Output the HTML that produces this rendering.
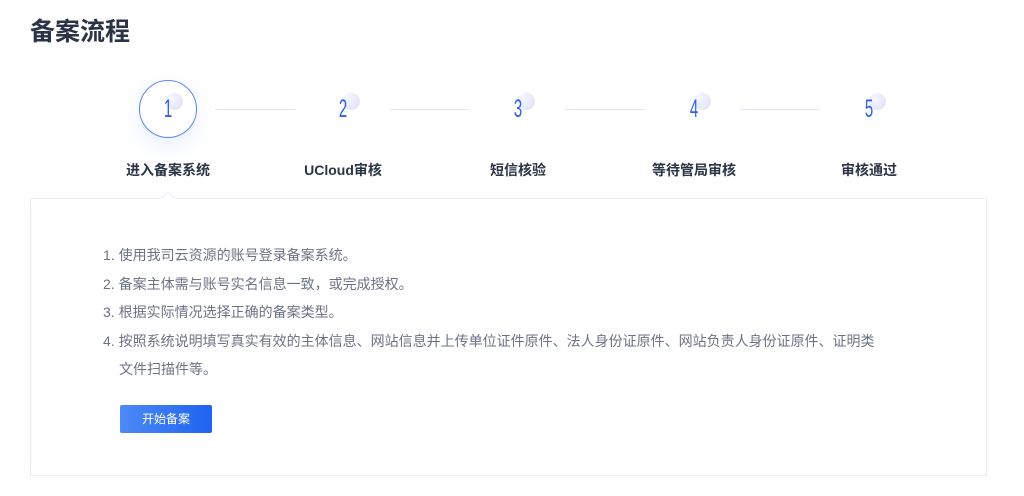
<!DOCTYPE html>
<html><head><meta charset="utf-8"><style>
body{margin:0;width:1024px;height:496px;background:#fff;font-family:"Liberation Sans","Noto Sans CJK SC",sans-serif;position:relative;overflow:hidden}
h1{position:absolute;left:30px;top:12px;margin:0;font-size:25px;font-weight:700;color:#2b3346}
.step{position:absolute;top:80px;width:140px;margin-left:-70px;text-align:center}
.num{position:relative;width:58px;height:58px;margin:0 auto;border-radius:50%}
.num.active{border:1px solid #5b86f5;box-shadow:0 8px 18px rgba(91,134,245,.12);width:56px;height:56px;background:#fff}
.num .dot{position:absolute;left:29px;top:13px;width:17px;height:17px;border-radius:50%;background:radial-gradient(circle at 30% 30%,#f6f7fe,#d9e0f9)}
.num .d{position:absolute;left:0;right:0;top:15px;font-size:25px;color:#2f5ff0;transform:scaleX(.6);font-family:"Liberation Sans",sans-serif}
.num.active .d{top:14px}
.lbl{margin-top:22px;font-size:14px;font-weight:700;color:#2b3346}
.line{position:absolute;top:109px;height:1px;background:#dfe6f6;width:80px}
.panel{position:absolute;left:30px;top:198px;width:957px;height:278px;border:1px solid #e6ecf8;box-sizing:border-box;background:#fff}
.caret{position:absolute;left:163px;top:193px;width:9px;height:9px;border-left:1px solid #e6ecf8;border-top:1px solid #e6ecf8;transform:rotate(45deg);background:#fff}
.list{position:absolute;left:103px;top:241px;font-size:14px;color:#6c7384;line-height:28.5px}
.btn{position:absolute;left:120px;top:405px;width:92px;height:28px;background:linear-gradient(90deg,#4d8af6,#1f63f0);color:#fff;font-size:12px;line-height:28px;text-align:center;border-radius:2px}
</style></head><body>
<h1>备案流程</h1>
<div class="line" style="left:215px"></div>
<div class="line" style="left:390px"></div>
<div class="line" style="left:565px"></div>
<div class="line" style="left:740px"></div>
<div class="step" style="left:168px"><div class="num active"><div class="dot" style="left:26px;top:12px"></div><div class="d">1</div></div><div class="lbl">进入备案系统</div></div>
<div class="step" style="left:343px"><div class="num"><div class="dot"></div><div class="d">2</div></div><div class="lbl">UCloud审核</div></div>
<div class="step" style="left:518px"><div class="num"><div class="dot"></div><div class="d">3</div></div><div class="lbl">短信核验</div></div>
<div class="step" style="left:694px"><div class="num"><div class="dot"></div><div class="d">4</div></div><div class="lbl">等待管局审核</div></div>
<div class="step" style="left:869px"><div class="num"><div class="dot"></div><div class="d">5</div></div><div class="lbl">审核通过</div></div>
<div class="panel"></div>
<div class="caret"></div>
<div class="list">
1. 使用我司云资源的账号登录备案系统。<br>
2. 备案主体需与账号实名信息一致，或完成授权。<br>
3. 根据实际情况选择正确的备案类型。<br>
4. 按照系统说明填写真实有效的主体信息、网站信息并上传单位证件原件、法人身份证原件、网站负责人身份证原件、证明类<br>
<span style="padding-left:16px">文件扫描件等。</span>
</div>
<div class="btn">开始备案</div>
</body></html>
